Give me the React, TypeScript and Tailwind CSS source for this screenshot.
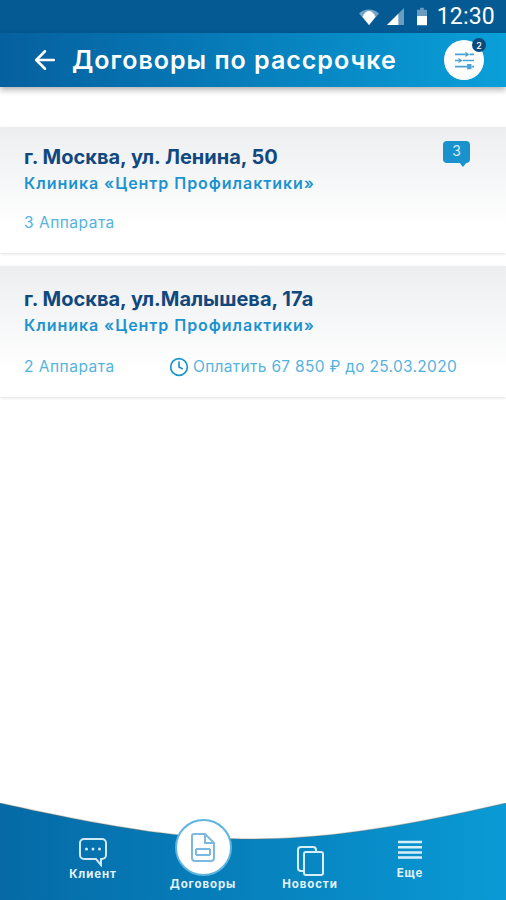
import { ArrowLeft, Clock } from 'lucide-react'

const font = { fontFamily: 'Inter, "Noto Sans", sans-serif' }

function StatusIcons() {
  return (
    <div className="flex items-center text-white">
      <svg width="20" height="16" viewBox="0 0 20 16" className="mr-[8px]">
        <path d="M0 4.5C5.5-.8 14.500-.8 20 4.500L10 16z" fill="#fff" opacity="0.45" />
        <path d="M3.500 7.800C7-.0 13-.0 16.500 7.800L10 16z" fill="#fff" />
      </svg>
      <svg width="17" height="17" viewBox="0 0 18 18" className="mr-[13px]">
        <path d="M0 18L18 0v18z" fill="#fff" opacity="0.4" />
        <path d="M0 18L12 6v12z" fill="#fff" />
      </svg>
      <svg width="10" height="19" viewBox="0 0 11 19" className="mr-[10px]">
        <path d="M3.500 0h4v2H11v17H0V2h3.500z" fill="#fff" opacity="0.4" />
        <path d="M0 9h11v10H0z" fill="#fff" />
      </svg>
      <span className="text-[23px] leading-none tracking-[0.2px]" style={{ fontFamily: 'Roboto, sans-serif' }}>
        12:30
      </span>
    </div>
  )
}

function FilterButton() {
  return (
    <div className="relative flex h-[40px] w-[40px] items-center justify-center rounded-full bg-white">
      <svg width="21" height="19" viewBox="0 0 24 22" fill="none" stroke="#4aa3d3" strokeWidth="2">
        <path d="M1 4h12M18 4h5M1 11h4M10 11h13M1 18h14M20 18h3" />
        <path d="M13 1v6l5-3zM5 8v6l5-3zM15 15h5v6h-5z" fill="#4aa3d3" stroke="none" />
      </svg>
      <span className="absolute -right-[2px] -top-[2px] flex h-[14px] w-[14px] items-center justify-center rounded-full bg-[#0d4a7c] text-[9px] font-medium leading-none text-white">
        2
      </span>
    </div>
  )
}

function Card(props: { title: string; devices: string; h: string; pt: string; rowGap: string; pay?: boolean; badge?: boolean }) {
  return (
    <div
      className={`relative bg-gradient-to-b from-[#eceef0] to-white to-80% pl-[24px] shadow-[0_1px_3px_rgba(0,0,0,0.12)] ${props.h} ${props.pt}`}
    >
      <div className="text-[20px] font-bold leading-[25px] text-[#11497f]">{props.title}</div>
      <div className="mt-[3px] text-[16px] font-semibold leading-[20px] tracking-[0.95px] text-[#1c93cf]">
        Клиника «Центр Профилактики»
      </div>
      <div className={`flex items-center text-[15.500px] leading-[20px] text-[#55b3df] ${props.rowGap}`}>
        <span className="w-[145px] tracking-[0.5px]">{props.devices}</span>
        {props.pay && (
          <span className="flex items-center tracking-[0.3px]">
            <Clock size={20} strokeWidth={2} className="mr-[4px] text-[#1c93cf]" />
            Оплатить 67 850 ₽ до 25.03.2020
          </span>
        )}
      </div>
      {props.badge && (
        <div className="absolute right-[36px] top-[14px] flex h-[22px] w-[27px] items-center justify-center rounded-[4px] bg-[#1a93cd] pb-[2px] text-[14px] leading-none text-[#d5eef9]">
          3
          <span className="absolute -bottom-[4px] right-[3px] h-0 w-0 border-l-[4px] border-r-[4px] border-t-[5px] border-l-transparent border-r-transparent border-t-[#1a93cd]" />
        </div>
      )}
    </div>
  )
}

function ChatIcon() {
  return (
    <svg width="30" height="30" viewBox="0 0 30 30" fill="none" stroke="#cfe9f6" strokeWidth="2">
      <path d="M6 2h18a4 4 0 0 1 4 4v12a4 4 0 0 1-4 4h-1v6l-5-6H6a4 4 0 0 1-4-4V6a4 4 0 0 1 4-4z" />
      <circle cx="8.500" cy="12" r="1.500" fill="#cfe9f6" stroke="none" />
      <circle cx="15" cy="12" r="1.500" fill="#cfe9f6" stroke="none" />
      <circle cx="21.500" cy="12" r="1.500" fill="#cfe9f6" stroke="none" />
    </svg>
  )
}

function DocIcon() {
  return (
    <svg width="24" height="29" viewBox="0 0 24 29" fill="none" stroke="#7cb8e0" strokeWidth="2">
      <path d="M3 1h11l9 9v15a3 3 0 0 1-3 3H4a3 3 0 0 1-3-3V3a2 2 0 0 1 2-2z" />
      <path d="M14 1v9h9M5 16h14M5 22h14M5 16v6M19 16v6" />
    </svg>
  )
}

function PagesIcon() {
  return (
    <svg width="27" height="30" viewBox="0 0 27 30" fill="none" stroke="#d8eef9" strokeWidth="2">
      <path d="M6 25H4a3 3 0 0 1-3-3V4a3 3 0 0 1 3-3h12a3 3 0 0 1 3 3v2" />
      <rect x="7" y="6" width="19" height="23" rx="2" />
    </svg>
  )
}

function MenuIcon() {
  return (
    <svg width="24" height="19" viewBox="0 0 24 19" fill="none" stroke="#d8eef9" strokeWidth="2.500">
      <path d="M0 2h24M0 7.200h24M0 12.400h24M0 17.600h24" />
    </svg>
  )
}

function NavLabel(props: { children: string }) {
  return <div className="text-[11.500px] font-bold leading-[14px] tracking-[0.9px] text-[#e3f3fb]">{props.children}</div>
}

export default function App() {
  return (
    <div className="flex h-[900px] w-[506px] flex-col overflow-hidden bg-white" style={font}>
      <div className="flex h-[33px] shrink-0 items-center justify-end bg-[#055a94] pr-[11px]">
        <StatusIcons />
      </div>
      <header className="flex h-[54px] shrink-0 items-center bg-gradient-to-r from-[#06609f] to-[#0a9fd9] pl-[30px] pr-[22px] shadow-[0_3px_6px_rgba(0,0,0,0.3)]">
        <ArrowLeft size={30} strokeWidth={2} className="mr-[12px] text-white" />
        <h1 className="flex-1 text-[25px] font-semibold leading-none tracking-[1px] text-white">
          Договоры по рассрочке
        </h1>
        <FilterButton />
      </header>

      <main className="flex flex-1 flex-col gap-[13px] pt-[40px]">
        <Card title="г. Москва, ул. Ленина, 50" devices="3 Аппарата" h="h-[126px]" pt="pt-[18px]" rowGap="mt-[20px]" badge />
        <Card title="г. Москва, ул.Малышева, 17а" devices="2 Аппарата" h="h-[131px]" pt="pt-[21px]" rowGap="mt-[22px]" pay />
      </main>

      <footer className="relative flex h-[97px] shrink-0 bg-gradient-to-r from-[#056aa6] to-[#0a9ad5] pl-[43px]">
        <svg width="506" height="40" viewBox="0 0 506 40" className="absolute left-0 top-0">
          <path d="M0 0C120 27 190 36 253 36S390 27 506 0V-1H0z" fill="#fff" />
          <path d="M0 0C120 27 190 36 253 36S390 27 506 0" fill="none" stroke="#7a6a50" strokeOpacity="0.3" strokeWidth="1.500" />
        </svg>
        <div className="relative flex w-[100px] flex-col items-center pt-[34px]">
          <ChatIcon />
          <div className="mt-[0px]">
            <NavLabel>Клиент</NavLabel>
          </div>
        </div>
        <div className="relative flex w-[120px] flex-col items-center pt-[16px]">
          <div className="flex h-[57px] w-[57px] items-center justify-center rounded-full border-[2px] border-[#5fb5e0] bg-white">
            <DocIcon />
          </div>
          <div className="mt-[1px]">
            <NavLabel>Договоры</NavLabel>
          </div>
        </div>
        <div className="relative flex w-[94px] flex-col items-center pt-[43px]">
          <PagesIcon />
          <div className="mt-[1px]">
            <NavLabel>Новости</NavLabel>
          </div>
        </div>
        <div className="relative flex w-[106px] flex-col items-center pt-[37px]">
          <MenuIcon />
          <div className="mt-[7px]">
            <NavLabel>Еще</NavLabel>
          </div>
        </div>
      </footer>
    </div>
  )
}
